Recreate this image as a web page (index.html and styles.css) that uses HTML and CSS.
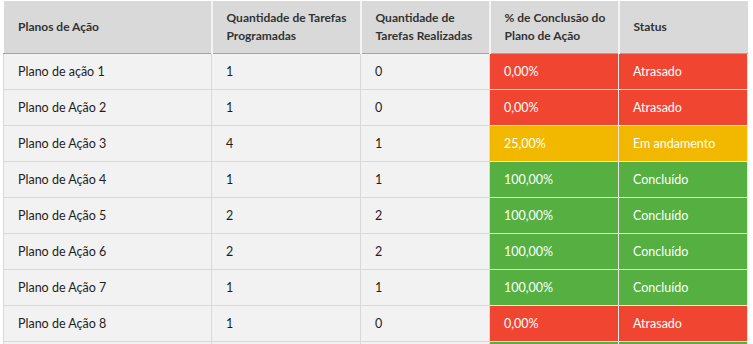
FILE: index.html
```html
<!DOCTYPE html>
<html lang="pt">
<head>
<meta charset="utf-8">
<link rel="stylesheet" href="styles.css">
</head>
<body>
<div class="wrap">
<table class="grid">
  <colgroup>
    <col class="c1"><col class="c2"><col class="c3"><col class="c4"><col class="c5">
  </colgroup>
  <thead>
    <tr>
      <th>Planos de Ação</th>
      <th>Quantidade de Tarefas Programadas</th>
      <th>Quantidade de Tarefas Realizadas</th>
      <th>% de Conclusão do Plano de Ação</th>
      <th>Status</th>
    </tr>
  </thead>
  <tbody>
    <tr><td>Plano de ação 1</td><td>1</td><td>0</td><td class="red">0,00%</td><td class="red">Atrasado</td></tr>
    <tr><td>Plano de Ação 2</td><td>1</td><td>0</td><td class="red">0,00%</td><td class="red">Atrasado</td></tr>
    <tr><td>Plano de Ação 3</td><td>4</td><td>1</td><td class="yellow">25,00%</td><td class="yellow">Em andamento</td></tr>
    <tr><td>Plano de Ação 4</td><td>1</td><td>1</td><td class="green">100,00%</td><td class="green">Concluído</td></tr>
    <tr><td>Plano de Ação 5</td><td>2</td><td>2</td><td class="green">100,00%</td><td class="green">Concluído</td></tr>
    <tr><td>Plano de Ação 6</td><td>2</td><td>2</td><td class="green">100,00%</td><td class="green">Concluído</td></tr>
    <tr><td>Plano de Ação 7</td><td>1</td><td>1</td><td class="green">100,00%</td><td class="green">Concluído</td></tr>
    <tr><td>Plano de Ação 8</td><td>1</td><td>0</td><td class="red">0,00%</td><td class="red">Atrasado</td></tr>
    <tr><td></td><td></td><td></td><td class="green"></td><td class="green"></td></tr>
  </tbody>
</table>
</div>
</body>
</html>
```

FILE: styles.css
```css
html, body {
  margin: 0;
  padding: 0;
  background: #ffffff;
  overflow: hidden;
  height: 344px;
}
.wrap {
  padding: 1px 0 0 3px;
  width: 750px;
}
.grid {
  border-collapse: collapse;
  table-layout: fixed;
  width: 744px;
  font-family: Lato, "Liberation Sans", sans-serif;
  font-size: 12.5px;
  color: #1e1e1e;
}
.c1 { width: 208px; }
.c2 { width: 149px; }
.c3 { width: 129px; }
.c4 { width: 129px; }
.c5 { width: 129px; }
.grid th {
  background: #d9d9d9;
  color: #333333;
  font-weight: 700;
  font-size: 12px;
  text-align: left;
  vertical-align: middle;
  height: 52px;
  padding: 0 4px 0 14px;
  line-height: 18px;
  border-left: 2px solid #f4f4f4;
  border-bottom: 1px solid #a3a3a3;
  box-sizing: border-box;
}
.grid th:first-child {
  border-left: 1px solid #ffffff;
}
.grid td {
  background: #f2f2f2;
  height: 36px;
  padding: 0 14px;
  border: 1px solid #d9d9d9;
  box-sizing: border-box;
  vertical-align: middle;
}
.grid td.red {
  background: #f04530;
  color: #ffffff;
  border-color: #e6e6e6;
}
.grid td.yellow {
  background: #f2b800;
  color: #ffffff;
  border-color: #e6e6e6;
}
.grid td.green {
  background: #55b041;
  color: #ffffff;
  border-color: #e6e6e6;
}
```
